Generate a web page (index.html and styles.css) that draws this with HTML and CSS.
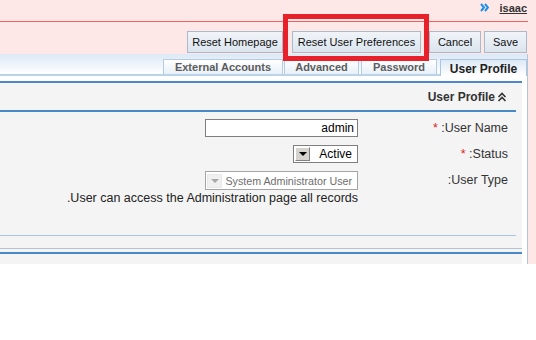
FILE: index.html
```html
<!DOCTYPE html>
<html dir="rtl">
<head>
<meta name="viewport" content="width=device-width, initial-scale=1">
<link rel="stylesheet" href="styles.css">
</head>
<body>
<div class="page">
  <!-- user bar -->
  <div class="topbar">
    <a class="user-link" href="#">isaac</a>
    <svg class="user-arrow" width="9" height="9" viewBox="0 0 9 9"><path d="M1 1 L4 4.5 L1 8 M5 1 L8 4.5 L5 8" fill="none" stroke="#1e8fe6" stroke-width="2"/></svg>
  </div>

  <!-- action buttons -->
  <div class="toolbar">
    <button class="btn btn-save">Save</button>
    <button class="btn btn-cancel">Cancel</button>
    <button class="btn btn-prefs">Reset User Preferences</button>
    <button class="btn btn-home">Reset Homepage</button>
  </div>

  <!-- highlight around the preferences button -->
  <div class="highlight"></div>

  <div class="frame">
    <div class="tabstrip">
      <div class="tab active tab-profile">User Profile</div>
      <div class="tab tab-password">Password</div>
      <div class="tab tab-advanced">Advanced</div>
      <div class="tab tab-external">External Accounts</div>
    </div>

    <div class="panel">
      <div class="panel-body">
        <div class="section">
          <div class="section-head">
            <svg width="10" height="10" viewBox="0 0 10 10"><path d="M1.5 5 L5 1.5 L8.5 5 M1.5 9 L5 5.5 L8.5 9" fill="none" stroke="#333" stroke-width="1.6"/></svg>
            <span>User Profile</span>
          </div>

          <div class="form">
            <label class="lbl">User Name: <span class="req">*</span></label>
            <div class="field"><input class="text-input" type="text" value="admin"></div>

            <label class="lbl">Status: <span class="req">*</span></label>
            <div class="field">
              <div class="select status-select">
                <span class="select-value">Active</span>
                <span class="select-btn"><i class="tri"></i></span>
              </div>
            </div>

            <label class="lbl">User Type:</label>
            <div class="field">
              <div class="select disabled type-select">
                <span class="select-value">System Administrator User</span>
                <span class="select-btn"><i class="tri"></i></span>
              </div>
              <div class="hint">User can access the Administration page all records.</div>
            </div>
          </div>
        </div>
        <div class="divider"></div>
        <div class="next-section"></div>
      </div>
    </div>
  </div>
</div>
</body>
</html>
```

FILE: styles.css
```css
/* base page */
body {
  margin: 0;
  font-family: "Liberation Sans", Arial, sans-serif;
  background-color: #fff;
  color: #222;
}

.page {
  position: relative;
  background-color: #fde7e7;
  width: 536px;
}

/* user bar at the top */
.topbar {
  width: 528px;
  margin-right: auto;
  height: 21px;
  border-bottom: 1px solid #f06262;
  display: flex;
  align-items: flex-start;
  gap: 10px;
}

.user-link {
  font-size: 11px;
  font-weight: bold;
  color: #333;
  text-decoration: underline;
  line-height: 13px;
  margin-top: 2px;
  margin-right: 1px;
}

.user-arrow {
  margin-top: 3px;
}

/* buttons row */
.toolbar {
  width: 527px;
  margin-right: auto;
  height: 32px;
  box-sizing: border-box;
  padding: 9px 0 0 0;
  display: flex;
}

.btn {
  height: 22px;
  padding: 0;
  font-family: "Liberation Sans", Arial, sans-serif;
  font-size: 11px;
  color: #111;
  background: linear-gradient(#f1f5f9, #dbe4ee);
  border: 1px solid #a9bacb;
  border-radius: 0;
  margin: 0 0 0 9px;
}

.btn-save {
  width: 43px;
  margin-left: 3px;
}

.btn-cancel {
  width: 52px;
  margin-left: 8px;
}

.btn-prefs {
  width: 129px;
}

.btn-home {
  width: 96px;
}

/* red box drawn around the preferences button */
.highlight {
  position: absolute;
  left: 283px;
  top: 14px;
  width: 136px;
  height: 37px;
  border: 5px solid #e8202a;
}

/* tabs and panel */
.frame {
  width: 527px;
  margin-right: auto;
  border-right: 1px solid #b3c5d8;
  background-color: #fff;
}

.tabstrip {
  height: 20px;
  border-bottom: 2px solid #b9d3ea;
  background: linear-gradient(#dce8f5, #fff);
  display: flex;
  align-items: flex-end;
}

.tab {
  height: 14px;
  box-sizing: content-box;
  border: 1px solid #b7cbe0;
  border-bottom: none;
  background: linear-gradient(#fff, #e8f0f8);
  font-size: 11px;
  font-weight: bold;
  color: #5c5c5c;
  line-height: 14px;
  text-align: center;
  margin-left: 2px;
}

.tab-external {
  width: 118px;
  margin-left: 0;
}

.tab-advanced {
  width: 73px;
  margin-left: 1px;
}

.tab-password {
  width: 74px;
  margin-left: 2px;
}

.tab.active {
  width: 85px;
  height: 16px;
  margin-bottom: -2px;
  margin-left: 3px;
  font-size: 12px;
  color: #222;
  line-height: 19px;
  border-color: #a9c5e0;
  background: linear-gradient(#dde9f6, #fff);
}

.panel {
  padding: 5px 5px 0 0;
}

.panel-body {
  background-color: #f4f4f4;
  border-top: 2px solid #4a88c8;
}

.section {
  margin-right: 6px;
  border-bottom: 1px solid #a9c5e1;
  padding-bottom: 29px;
  margin-bottom: 12px;
}

.section-head {
  height: 27px;
  border-bottom: 2px solid #4a88c8;
  display: flex;
  align-items: center;
  gap: 2px;
  padding-right: 9px;
  font-size: 12px;
  font-weight: bold;
  color: #333;
}

.section-head svg {
  margin-top: 1px;
}

/* form grid */
.form {
  display: grid;
  grid-template-columns: 150px 1fr;
  row-gap: 8px;
  padding: 7px 8px 0 0;
}

.lbl {
  font-size: 12.5px;
  color: #333;
  line-height: 18px;
}

.req {
  color: #e02020;
}

.field {
  display: flex;
  flex-direction: column;
  align-items: flex-start;
}

.text-input {
  width: 153px;
  height: 18px;
  box-sizing: border-box;
  border: 1px solid #7f7f7f;
  padding: 0 3px;
  font-family: "Liberation Sans", Arial, sans-serif;
  font-size: 12px;
  color: #000;
  background-color: #fff;
}

.select {
  height: 18px;
  box-sizing: border-box;
  border: 1px solid #7f7f7f;
  background-color: #fff;
  display: flex;
  align-items: center;
  justify-content: space-between;
  font-size: 12px;
  color: #000;
  white-space: nowrap;
}

.status-select {
  width: 65px;
}

.type-select {
  width: 153px;
  height: 19px;
  border-color: #a4a4a4;
  font-size: 10.7px;
  color: #6d6d6d;
}

.select-value {
  padding-right: 5px;
}

.select-btn {
  width: 15px;
  height: 14px;
  margin-left: 1px;
  background-color: #d6d3ce;
  border: 1px solid;
  border-color: #fff #808080 #808080 #fff;
  box-sizing: border-box;
  display: flex;
  align-items: center;
  justify-content: center;
}

.tri {
  width: 0;
  height: 0;
  border-left: 4px solid transparent;
  border-right: 4px solid transparent;
  border-top: 4px solid #000;
}

.disabled .select-btn {
  background-color: #f0f0f0;
  border-color: #e8e8e8;
}

.disabled .tri {
  border-top-color: #a8a8a8;
}

.hint {
  font-size: 12.5px;
  color: #222;
  white-space: nowrap;
  line-height: 15px;
  margin-top: 1px;
}

.divider {
  border-top: 1px solid #b1c4d4;
  height: 3px;
}

.next-section {
  border-top: 2px solid #4a88c8;
  height: 10px;
}
```
